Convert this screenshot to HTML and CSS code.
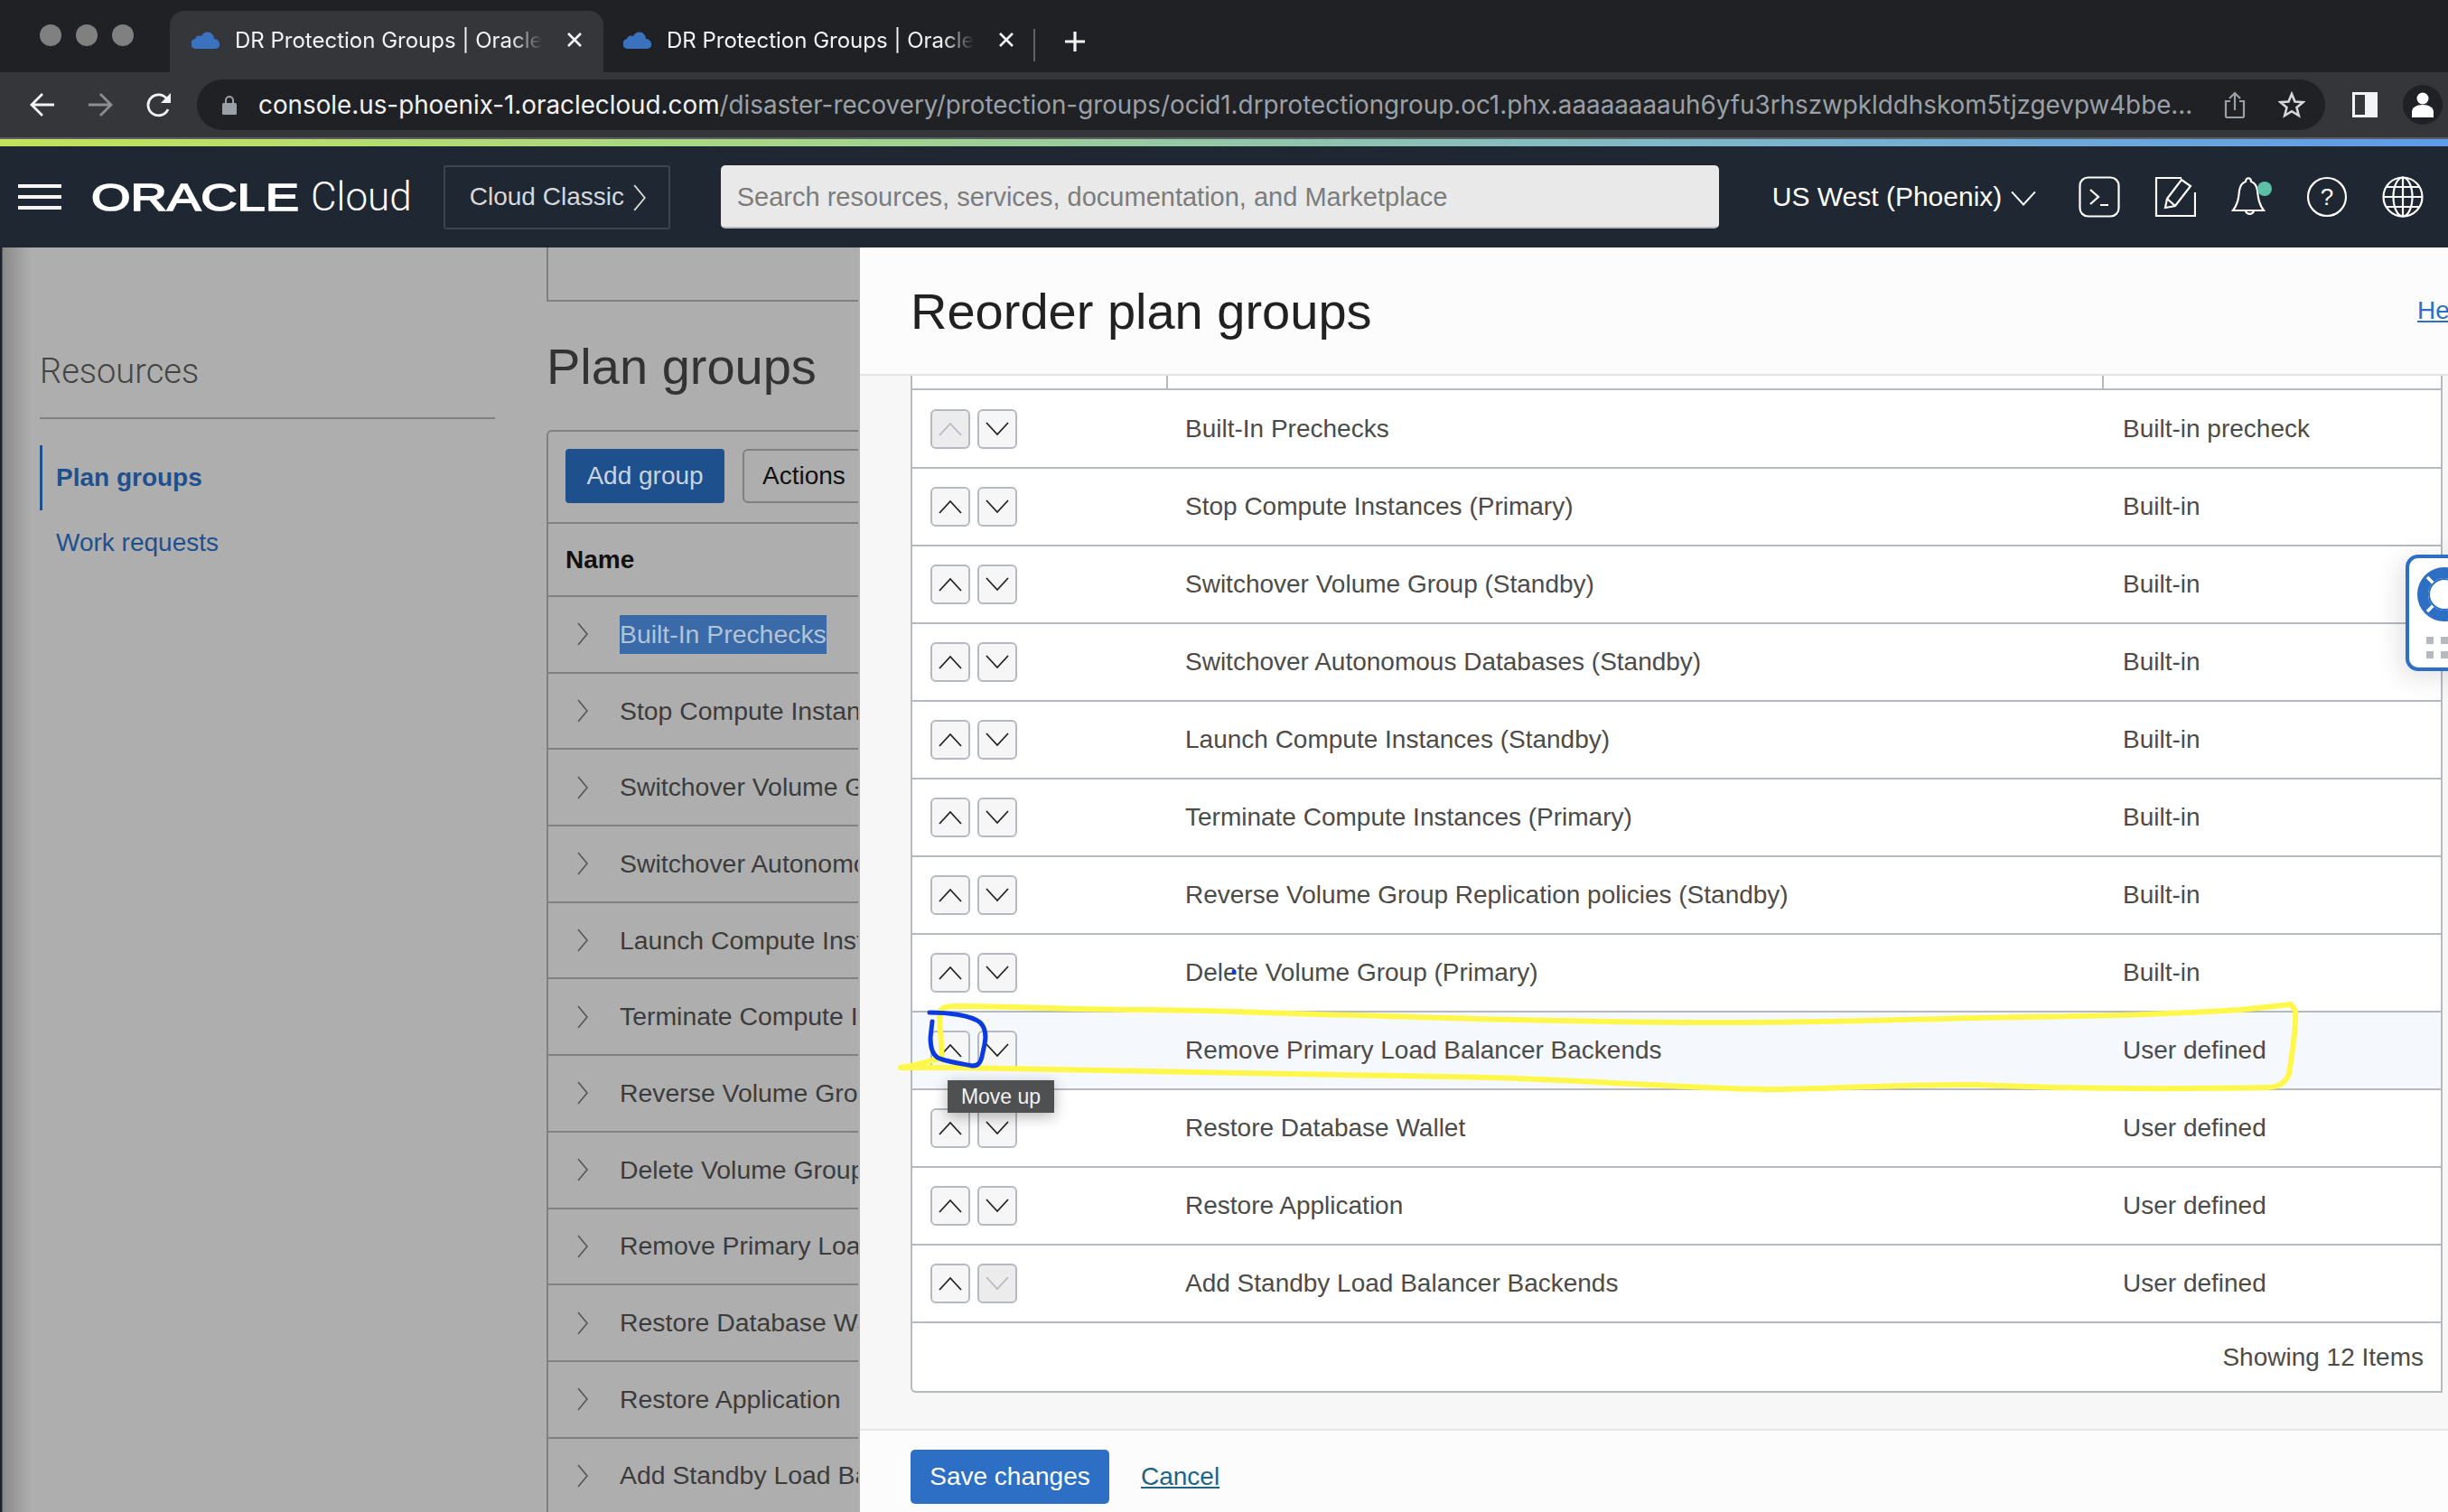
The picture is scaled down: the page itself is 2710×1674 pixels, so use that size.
FILE: index.html
```html
<!DOCTYPE html>
<html lang="en">
<head>
    <meta charset="UTF-8">
    <title>DR Protection Groups | Oracle Cloud</title>
    <link rel="stylesheet" href="styles.css">
</head>
<body>
    <svg class="sprite" width="0" height="0">
        <symbol id="up" viewBox="0 0 26 16"><path d="M1 15 13 2l12 13" fill="none" stroke="currentColor" stroke-width="1.8"/></symbol>
        <symbol id="down" viewBox="0 0 26 16"><path d="M1 1l12 13L25 1" fill="none" stroke="currentColor" stroke-width="1.8"/></symbol>
        <symbol id="right" viewBox="0 0 12 26"><path d="M1 1l10 12L1 25" fill="none" stroke="currentColor" stroke-width="1.6"/></symbol>
        <symbol id="cloud" viewBox="0 0 32 20"><path d="M6 20a5.500 5.500 0 0 1-2-11C5 5 9 5 11 6 13 1 20 0 23 4c1.500 1.500 2 3 2 5 7 0 9 11 1 11z" fill="#3a72c0"/></symbol>
        <symbol id="close" viewBox="0 0 18 18"><path d="M2 2l14 14M16 2 2 16" fill="none" stroke="#f1f3f4" stroke-width="2.600"/></symbol>
    </svg>

    <div class="tabstrip">
        <div class="dots"><i></i><i></i><i></i></div>
        <div class="tab active">
            <svg class="favicon"><use href="#cloud"/></svg>
            <span class="tab-title">DR Protection Groups | Oracle Cloud Infrastructure</span>
            <svg class="tab-close"><use href="#close"/></svg>
        </div>
        <div class="tab">
            <svg class="favicon"><use href="#cloud"/></svg>
            <span class="tab-title">DR Protection Groups | Oracle Cloud Infrastructure</span>
            <svg class="tab-close"><use href="#close"/></svg>
        </div>
        <div class="tab-sep"></div>
        <svg class="tab-new" viewBox="0 0 24 24"><path d="M12 1v22M1 12h22" fill="none" stroke="#f1f3f4" stroke-width="3.200"/></svg>
    </div>

    <div class="toolbar">
        <svg class="nav-icon" viewBox="0 0 28 26"><path d="M27 13H3M14 1 2 13l12 12" fill="none" stroke="#f1f3f4" stroke-width="2.800"/></svg>
        <svg class="nav-icon fwd" viewBox="0 0 28 26"><path d="M1 13h24M14 1l12 12-12 12" fill="none" stroke="#8c8e91" stroke-width="2.800"/></svg>
        <svg class="nav-icon reload" viewBox="0 0 30 28"><path d="M25 19a11.500 11.500 0 1 1-1-11" fill="none" stroke="#f1f3f4" stroke-width="2.800"/><path d="M28 1v11H17z" fill="#f1f3f4"/></svg>
        <div class="urlbar">
            <svg class="lock" viewBox="0 0 18 22"><path d="M5 10V6a4 4 0 0 1 8 0v4" fill="none" stroke="#9aa0a6" stroke-width="2"/><rect x="1" y="9" width="16" height="13" rx="1.500" fill="#9aa0a6"/></svg>
            <span class="url"><b>console.us-phoenix-1.oraclecloud.com</b>/disaster-recovery/protection-groups/ocid1.drprotectiongroup.oc1.phx.aaaaaaaauh6yfu3rhszwpklddhskom5tjzgevpw4bbe...</span>
            <svg class="share" viewBox="0 0 24 30"><path d="M7 11H2v17a1.500 1.500 0 0 0 1.500 1h17a1.500 1.500 0 0 0 1.500-1V11h-5M12 21V2M6 8l6-6 6 6" fill="none" stroke="#9aa0a6" stroke-width="2.200"/></svg>
            <svg class="star" viewBox="0 0 30 30"><path d="m15 3 3.500 8.500 9 .7-7 5.800 2.300 9L15 22.200 7.200 27l2.300-9-7-5.800 9-.7z" fill="none" stroke="#d5d7d9" stroke-width="2.600"/></svg>
        </div>
        <svg class="panel-icon" viewBox="0 0 28 28"><path d="M0 0h28v28H0zM3 3v22h11V3z" fill="#f1f3f4" fill-rule="evenodd"/></svg>
        <div class="avatar">
            <svg viewBox="0 0 24 28"><circle cx="12" cy="7" r="6.500" fill="#fff"/><path d="M0 28v-6c0-5 5-8 12-8s12 3 12 8v6z" fill="#fff"/></svg>
        </div>
    </div>
    <div class="accent"></div>

    <header class="console-head">
        <div class="burger"><i></i><i></i><i></i></div>
        <svg class="logo" viewBox="0 0 230 42"><text x="0" y="36" textLength="230" lengthAdjust="spacingAndGlyphs">ORACLE</text></svg>
        <span class="logo-cloud">Cloud</span>
        <div class="classic">Cloud Classic <svg class="chev-sm"><use href="#right"/></svg></div>
        <div class="search">Search resources, services, documentation, and Marketplace</div>
        <div class="region">US West (Phoenix) <svg class="chev-region"><use href="#down"/></svg></div>
        <div class="head-icons">
            <svg viewBox="0 0 46 46"><rect x="1.500" y="1.500" width="43" height="43" rx="9"/><path d="M13 15l9 8-9 8M24 32h9"/></svg>
            <svg viewBox="0 0 46 46"><path d="M30 2H2v42h43V18M12 35l2-10L30 4l10 7-17 22z"/><path d="M14 25l9 8"/></svg>
            <span class="bell">
                <svg viewBox="0 0 46 46"><path d="M3 38c5-7 6-12 7-22 1-6 4-9 7-10 0-5 6-5 6 0 3 1 6 4 7 10 1 10 2 15 7 22zM17 39a5 5 0 0 0 9 0"/></svg>
                <i></i>
            </span>
            <svg viewBox="0 0 46 46"><circle cx="23" cy="23" r="21"/><text x="23" y="32" class="help-mark">?</text></svg>
            <svg viewBox="0 0 46 46"><circle cx="23" cy="23" r="21.500"/><ellipse cx="23" cy="23" rx="10.500" ry="21.500"/><path d="M23 2v42M2 23h42M5 12h36M5 34h36"/></svg>
        </div>
    </header>

    <main class="stage">
        <div class="page">
            <aside class="side">
                <h3 class="side-title"><span>Resources</span></h3>
                <ul class="side-nav">
                    <li class="current"><a>Plan groups</a></li>
                    <li><a>Work requests</a></li>
                </ul>
            </aside>
            <section class="content">
                <div class="stub"></div>
                <h2 class="content-title">Plan groups</h2>
                <div class="card">
                    <div class="card-bar">
                        <span class="btn-add">Add group</span>
                        <span class="btn-actions">Actions</span>
                    </div>
                    <div class="card-name">Name</div>
                    <div class="g-row"><svg class="g-chev"><use href="#right"/></svg><span class="selected">Built-In Prechecks</span></div>
                    <div class="g-row"><svg class="g-chev"><use href="#right"/></svg><span>Stop Compute Instances (Primary)</span></div>
                    <div class="g-row"><svg class="g-chev"><use href="#right"/></svg><span>Switchover Volume Group (Standby)</span></div>
                    <div class="g-row"><svg class="g-chev"><use href="#right"/></svg><span>Switchover Autonomous Databases (Standby)</span></div>
                    <div class="g-row"><svg class="g-chev"><use href="#right"/></svg><span>Launch Compute Instances (Standby)</span></div>
                    <div class="g-row"><svg class="g-chev"><use href="#right"/></svg><span>Terminate Compute Instances (Primary)</span></div>
                    <div class="g-row"><svg class="g-chev"><use href="#right"/></svg><span>Reverse Volume Group Replication policies (Standby)</span></div>
                    <div class="g-row"><svg class="g-chev"><use href="#right"/></svg><span>Delete Volume Group (Primary)</span></div>
                    <div class="g-row"><svg class="g-chev"><use href="#right"/></svg><span>Remove Primary Load Balancer Backends</span></div>
                    <div class="g-row"><svg class="g-chev"><use href="#right"/></svg><span>Restore Database Wallet</span></div>
                    <div class="g-row"><svg class="g-chev"><use href="#right"/></svg><span>Restore Application</span></div>
                    <div class="g-row"><svg class="g-chev"><use href="#right"/></svg><span>Add Standby Load Balancer Backends</span></div>
                </div>
            </section>
        </div>

        <div class="panel">
            <div class="panel-head">
                <h1>Reorder plan groups</h1>
                <a class="help-link">Help</a>
            </div>
            <div class="panel-body">
                <div class="order-box">
                    <div class="order-top"><i></i><i></i></div>
                    <table class="order">
                        <tr>
                            <td class="c-move"><button class="off"><svg><use href="#up"/></svg></button><button><svg><use href="#down"/></svg></button></td>
                            <td class="c-name">Built-In Prechecks</td>
                            <td>Built-in precheck</td>
                        </tr>
                        <tr>
                            <td class="c-move"><button><svg><use href="#up"/></svg></button><button><svg><use href="#down"/></svg></button></td>
                            <td class="c-name">Stop Compute Instances (Primary)</td>
                            <td>Built-in</td>
                        </tr>
                        <tr>
                            <td class="c-move"><button><svg><use href="#up"/></svg></button><button><svg><use href="#down"/></svg></button></td>
                            <td class="c-name">Switchover Volume Group (Standby)</td>
                            <td>Built-in</td>
                        </tr>
                        <tr>
                            <td class="c-move"><button><svg><use href="#up"/></svg></button><button><svg><use href="#down"/></svg></button></td>
                            <td class="c-name">Switchover Autonomous Databases (Standby)</td>
                            <td>Built-in</td>
                        </tr>
                        <tr>
                            <td class="c-move"><button><svg><use href="#up"/></svg></button><button><svg><use href="#down"/></svg></button></td>
                            <td class="c-name">Launch Compute Instances (Standby)</td>
                            <td>Built-in</td>
                        </tr>
                        <tr>
                            <td class="c-move"><button><svg><use href="#up"/></svg></button><button><svg><use href="#down"/></svg></button></td>
                            <td class="c-name">Terminate Compute Instances (Primary)</td>
                            <td>Built-in</td>
                        </tr>
                        <tr>
                            <td class="c-move"><button><svg><use href="#up"/></svg></button><button><svg><use href="#down"/></svg></button></td>
                            <td class="c-name">Reverse Volume Group Replication policies (Standby)</td>
                            <td>Built-in</td>
                        </tr>
                        <tr>
                            <td class="c-move"><button><svg><use href="#up"/></svg></button><button><svg><use href="#down"/></svg></button></td>
                            <td class="c-name">Delete Volume Group (Primary)</td>
                            <td>Built-in</td>
                        </tr>
                        <tr class="hover">
                            <td class="c-move"><button><svg><use href="#up"/></svg></button><button><svg><use href="#down"/></svg></button></td>
                            <td class="c-name">Remove Primary Load Balancer Backends</td>
                            <td>User defined</td>
                        </tr>
                        <tr>
                            <td class="c-move"><button><svg><use href="#up"/></svg></button><button><svg><use href="#down"/></svg></button></td>
                            <td class="c-name">Restore Database Wallet</td>
                            <td>User defined</td>
                        </tr>
                        <tr>
                            <td class="c-move"><button><svg><use href="#up"/></svg></button><button><svg><use href="#down"/></svg></button></td>
                            <td class="c-name">Restore Application</td>
                            <td>User defined</td>
                        </tr>
                        <tr>
                            <td class="c-move"><button><svg><use href="#up"/></svg></button><button class="off"><svg><use href="#down"/></svg></button></td>
                            <td class="c-name">Add Standby Load Balancer Backends</td>
                            <td>User defined</td>
                        </tr>
                    </table>
                    <div class="order-foot">Showing 12 Items</div>
                </div>
            </div>
            <div class="panel-foot">
                <span class="btn-save">Save changes</span>
                <a class="cancel">Cancel</a>
            </div>
        </div>

        <div class="tooltip">Move up</div>

        <div class="help-widget">
            <svg class="buoy" viewBox="0 0 60 60">
                <circle cx="30" cy="30" r="24" fill="none" stroke="#2d6fc4" stroke-width="12"/>
                <path d="M11 11 20 20M49 11 40 20M11 49l9-9M49 49l-9-9" stroke="#fff" stroke-width="3.500"/>
                <circle cx="30" cy="30" r="17" fill="#fff" stroke="#2d6fc4" stroke-width="2"/>
            </svg>
            <div class="grip"><i></i><i></i><i></i><i></i></div>
        </div>

        <!-- pen marks drawn over the screenshot -->
        <svg class="ink" viewBox="0 0 2710 1400">
            <path class="ink-yellow" d="M997 908C1010 906 1025 902 1032 900L1042 898 1043 900 1040 850C1040 842 1045 840 1060 840 1120 840 1200 844 1270 844 1340 844 1400 848 1500 850 1600 853 1720 858 1900 858 2050 858 2120 854 2240 852 2340 851 2400 849 2480 844L2536 838 2541 845C2542 860 2538 890 2534 915 2530 925 2522 930 2510 930 2400 932 2300 932 2190 927 2100 926 2020 932 1960 932 1870 932 1750 920 1600 918 1400 914 1200 910 1060 908 1040 908 1020 908 997 908Z"/>
            <path class="ink-blue" d="M1029 847C1050 847 1075 850 1085 858 1091 864 1092 872 1090 882L1087 896C1085 904 1082 906 1076 906 1066 904 1046 901 1038 897 1032 893 1030 885 1030 875L1032 857"/>
            <circle cx="1366" cy="802" r="2.500" fill="#0b3be0"/>
        </svg>
    </main>
</body>
</html>
```
FILE: styles.css
```css
* {
    box-sizing: border-box;
}

html, body {
    margin: 0;
    width: 2710px;
    height: 1674px;
    overflow: hidden;
    font-family: "Liberation Sans", Arial, sans-serif;
    background-color: #aeaeae;
}

.sprite {
    position: absolute;
}

/* browser chrome */
.tabstrip {
    display: flex;
    align-items: flex-end;
    height: 80px;
    background-color: #202124;
    color: #f1f3f4;
    font-family: Inter, sans-serif;
}

.dots {
    display: flex;
    gap: 16px;
    width: 188px;
    height: 56px;
    padding: 3px 0 0 44px;
    align-self: flex-start;
    margin-top: 24px;
}

.dots i {
    width: 24px;
    height: 24px;
    border-radius: 50%;
    background-color: #808080;
}

.tab {
    display: flex;
    align-items: center;
    width: 478px;
    height: 68px;
    padding: 0 0 4px 24px;
    border-radius: 16px 16px 0 0;
}

.tab.active {
    width: 480px;
    background-color: #35363a;
}

.tab + .tab {
    margin-left: 0;
    padding-left: 22px;
}

.favicon {
    width: 32px;
    height: 20px;
    flex-shrink: 0;
}

.tab-title {
    width: 340px;
    margin-left: 16px;
    font-size: 24px;
    white-space: nowrap;
    overflow: hidden;
    -webkit-mask-image: linear-gradient(to right, #000 90%, transparent 100%);
    mask-image: linear-gradient(to right, #000 90%, transparent 100%);
}

.tab-close {
    width: 18px;
    height: 18px;
    margin-left: 27px;
    flex-shrink: 0;
}

.tab-sep {
    width: 2px;
    height: 36px;
    margin: 0 0 12px -2px;
    background-color: #5f6368;
}

.tab-new {
    width: 24px;
    height: 24px;
    margin: 0 0 22px 32px;
}

.toolbar {
    display: flex;
    align-items: center;
    height: 72px;
    background-color: #35363a;
    padding-left: 33px;
}

.nav-icon {
    width: 28px;
    height: 26px;
}

.nav-icon.fwd {
    margin-left: 36px;
}

.nav-icon.reload {
    width: 30px;
    height: 28px;
    margin-left: 36px;
}

.urlbar {
    display: flex;
    align-items: center;
    width: 2356px;
    height: 56px;
    margin-left: 27px;
    padding-left: 27px;
    border-radius: 28px;
    background-color: #202124;
    font-family: Inter, sans-serif;
}

.lock {
    width: 18px;
    height: 22px;
}

.url {
    width: 2146px;
    margin-left: 23px;
    font-size: 27.800px;
    color: #9aa0a6;
    white-space: nowrap;
    overflow: hidden;
}

.url b {
    font-weight: 400;
    color: #f1f3f4;
}

.share {
    width: 24px;
    height: 30px;
    margin-left: 30px;
}

.star {
    width: 30px;
    height: 30px;
    margin-left: 36px;
}

.panel-icon {
    width: 28px;
    height: 28px;
    margin-left: 30px;
}

.avatar {
    display: flex;
    align-items: center;
    justify-content: center;
    width: 44px;
    height: 44px;
    margin-left: 28px;
    border-radius: 50%;
    background-color: #202124;
}

.avatar svg {
    width: 24px;
    height: 28px;
}

.accent {
    height: 10px;
    border-top: 2px solid #5b5c5f;
    background: linear-gradient(to right, #c2e25c 0%, #a3d48c 35%, #7fb8c8 68%, #5c9bea 100%);
}

/* console header */
.console-head {
    display: flex;
    align-items: center;
    height: 112px;
    background-color: #1f2733;
    color: #fff;
    padding-left: 20px;
}

.burger {
    display: flex;
    flex-direction: column;
    gap: 8px;
    width: 48px;
}

.burger i {
    height: 4px;
    background-color: #f5f5f5;
}

.logo {
    width: 230px;
    height: 42px;
    margin-left: 33px;
    overflow: visible;
}

.logo text {
    font-family: "Liberation Sans", sans-serif;
    font-weight: 400;
    font-size: 42px;
    fill: #fff;
    stroke: #fff;
    stroke-width: 1.600;
}

.logo-cloud {
    margin-left: 13px;
    font-size: 44px;
    font-family: Roboto, sans-serif;
    font-weight: 300;
}

.classic {
    display: flex;
    align-items: center;
    gap: 10px;
    width: 251px;
    height: 71px;
    margin-left: 35px;
    padding-left: 27px;
    border: 2px solid #3b4451;
    border-radius: 3px;
    font-size: 28px;
    color: #d6d8db;
}

.chev-sm {
    width: 14px;
    height: 30px;
    margin-top: 2px;
}

.search {
    display: flex;
    align-items: center;
    width: 1105px;
    height: 70px;
    margin-left: 56px;
    padding-left: 16px;
    background-color: #e9e9e9;
    border: 2px solid #e9e9e9;
    border-bottom-color: #b8bbbf;
    border-radius: 5px;
    font-size: 29px;
    color: #7c7c7c;
}

.region {
    display: flex;
    align-items: center;
    gap: 10px;
    margin-left: 59px;
    font-size: 30px;
    white-space: nowrap;
}

.chev-region {
    width: 28px;
    height: 18px;
    margin-top: 4px;
}

.head-icons {
    display: flex;
    align-items: center;
    gap: 38px;
    margin-left: 47px;
}

.head-icons svg {
    display: block;
    width: 46px;
    height: 46px;
    fill: none;
    stroke: #fff;
    stroke-width: 2.200;
}

.head-icons .help-mark {
    font-family: "Liberation Sans", sans-serif;
    font-size: 26px;
    text-anchor: middle;
    fill: #fff;
    stroke: none;
}

.bell {
    position: relative;
}

.bell i {
    position: absolute;
    top: 6px;
    right: 0;
    width: 16px;
    height: 16px;
    border-radius: 50%;
    background-color: #5dbfa5;
}

/* page behind the panel */
.stage {
    position: relative;
    height: 1400px;
    overflow: hidden;
}

.page {
    display: flex;
    height: 100%;
    background: linear-gradient(to right, #20242c 0, #20242c 2px, #8a8a8a 3px, #aeaeae 34px);
}

.side {
    width: 605px;
    padding-left: 44px;
    flex-shrink: 0;
}

.side-title {
    display: flex;
    align-items: flex-end;
    width: 504px;
    height: 190px;
    margin: 0;
    padding-bottom: 29px;
    border-bottom: 2px solid #808080;
    font-family: Roboto, sans-serif;
    font-weight: 300;
    font-size: 38px;
    color: #444;
}

.side-nav {
    list-style-type: none;
    margin: 29px 0 0;
    padding: 0;
    font-size: 28px;
    color: #1f508e;
}

.side-nav li {
    display: flex;
    align-items: center;
    height: 72px;
    padding-left: 18px;
}

.side-nav .current {
    padding-left: 15px;
    border-left: 3px solid #1f508e;
    font-weight: 700;
}

.content {
    flex: 1;
}

.stub {
    width: 400px;
    height: 60px;
    border-left: 2px solid #808080;
    border-bottom: 2px solid #808080;
}

.content-title {
    display: flex;
    align-items: center;
    height: 142px;
    margin: 0;
    font-size: 56px;
    font-weight: 400;
    color: #333;
}

.card {
    border-left: 2px solid #808080;
    border-top: 2px solid #808080;
    border-top-left-radius: 6px;
    font-size: 28.400px;
    color: #3c3c3c;
}

.card-bar {
    display: flex;
    align-items: flex-start;
    gap: 20px;
    height: 102px;
    padding: 19px 0 0 19px;
    border-bottom: 2px solid #808080;
    font-size: 28px;
}

.btn-add {
    display: flex;
    align-items: center;
    justify-content: center;
    width: 176px;
    height: 60px;
    border-radius: 4px;
    background-color: #1f508e;
    color: #c9d3df;
}

.btn-actions {
    display: flex;
    align-items: center;
    width: 180px;
    height: 60px;
    padding-left: 20px;
    border: 2px solid #808080;
    border-radius: 6px;
    color: #111;
}

.card-name {
    display: flex;
    align-items: center;
    height: 81px;
    padding-left: 19px;
    border-bottom: 2px solid #808080;
    font-size: 28px;
    font-weight: 700;
    color: #111;
}

.g-row {
    display: flex;
    align-items: center;
    gap: 35px;
    height: 84.700px;
    padding-left: 32px;
    border-bottom: 2px solid #808080;
}

.g-chev {
    width: 12px;
    height: 26px;
    color: #555;
    flex-shrink: 0;
}

.g-row span {
    white-space: nowrap;
}

.g-row .selected {
    display: flex;
    align-items: center;
    height: 43px;
    background-color: #3a6aa8;
    color: #b3c3d6;
}

/* slide-in panel */
.panel {
    position: absolute;
    top: 0;
    left: 950px;
    right: 0;
    bottom: 0;
    display: flex;
    flex-direction: column;
    border-left: 2px solid #b0b0b0;
    background-color: #f7f7f7;
}

.panel-head {
    display: flex;
    align-items: center;
    justify-content: space-between;
    height: 142px;
    padding-left: 56px;
    background-color: #fcfcfc;
    border-bottom: 2px solid #e5e5e5;
}

.panel-head h1 {
    margin: 0;
    font-size: 56px;
    font-weight: 400;
    color: #212121;
}

.help-link {
    width: 34px;
    overflow: hidden;
    font-size: 28px;
    color: #2d6fc4;
    text-decoration: underline;
}

.panel-body {
    flex: 1;
    padding-left: 56px;
    padding-right: 6px;
}

.order-box {
    background-color: #fff;
    border-left: 2px solid #b5b9c0;
    border-right: 2px solid #b5b9c0;
    border-bottom: 2px solid #b5b9c0;
    border-bottom-left-radius: 6px;
    font-size: 28px;
    color: #4d4b48;
}

.order-top {
    display: flex;
    height: 16px;
    border-bottom: 2px solid #b5b9c0;
}

.order-top i {
    width: 2px;
    height: 14px;
    margin-left: 281px;
    background-color: #b5b9c0;
}

.order-top i + i {
    margin-left: 1034px;
}

.order {
    width: 100%;
    border-collapse: collapse;
    table-layout: fixed;
}

.order td {
    height: 86px;
    padding: 0 0 0 21px;
    border-bottom: 2px solid #b5b9c0;
}

.order .c-move {
    width: 281px;
    padding: 0 0 0 20px;
    white-space: nowrap;
    font-size: 0;
}

.c-name {
    width: 1038px;
}

.order .hover td {
    background-color: #f5f8fd;
}

.order button {
    width: 44px;
    height: 44px;
    margin-right: 8px;
    padding: 0;
    border: 2px solid #b5b9c0;
    border-radius: 6px;
    background-color: #f6f6f6;
    color: #222;
    vertical-align: middle;
}

.order button svg {
    display: block;
    width: 26px;
    height: 16px;
    margin: auto;
}

.order button.off {
    background-color: #ececec;
    color: #b5b9c0;
}

.order-foot {
    display: flex;
    align-items: center;
    justify-content: flex-end;
    height: 75px;
    padding-right: 19px;
}

.panel-foot {
    display: flex;
    align-items: flex-start;
    gap: 35px;
    height: 92px;
    padding: 21px 0 0 56px;
    background-color: #fcfcfc;
    border-top: 2px solid #e5e5e5;
}

.btn-save {
    display: flex;
    align-items: center;
    justify-content: center;
    width: 220px;
    height: 60px;
    border-radius: 5px;
    background-color: #2d6fc4;
    color: #fff;
    font-size: 28px;
}

.cancel {
    height: 60px;
    line-height: 60px;
    font-size: 28px;
    color: #1d6486;
    text-decoration: underline;
}

.tooltip {
    position: absolute;
    left: 1049px;
    top: 922px;
    display: flex;
    align-items: center;
    justify-content: center;
    width: 118px;
    height: 36px;
    background-color: #4f5052;
    box-shadow: 0 4px 16px rgba(0, 0, 0, 0.3);
    color: #f2f2f2;
    font-family: "Liberation Sans", sans-serif;
    font-size: 23px;
}

.help-widget {
    position: absolute;
    left: 2663px;
    top: 340px;
    width: 80px;
    height: 129px;
    padding: 10px 0 0 9px;
    background-color: #fff;
    border: 4px solid #2d6fc4;
    border-radius: 14px;
    box-shadow: -6px 6px 30px rgba(0, 0, 0, 0.12);
}

.buoy {
    display: block;
    width: 60px;
    height: 60px;
}

.grip {
    display: grid;
    grid-template-columns: 8px 8px;
    gap: 8px;
    margin: 17px 0 0 10px;
}

.grip i {
    width: 8px;
    height: 8px;
    background-color: #b5b8bd;
}

.ink {
    position: absolute;
    left: 0;
    top: 0;
    width: 2710px;
    height: 1400px;
    fill: none;
}

.ink-yellow {
    stroke: #fff84a;
    stroke-width: 6;
    stroke-linejoin: round;
    stroke-linecap: round;
}

.ink-blue {
    stroke: #0b3be0;
    stroke-width: 5;
    stroke-linecap: round;
    stroke-linejoin: round;
}
```
